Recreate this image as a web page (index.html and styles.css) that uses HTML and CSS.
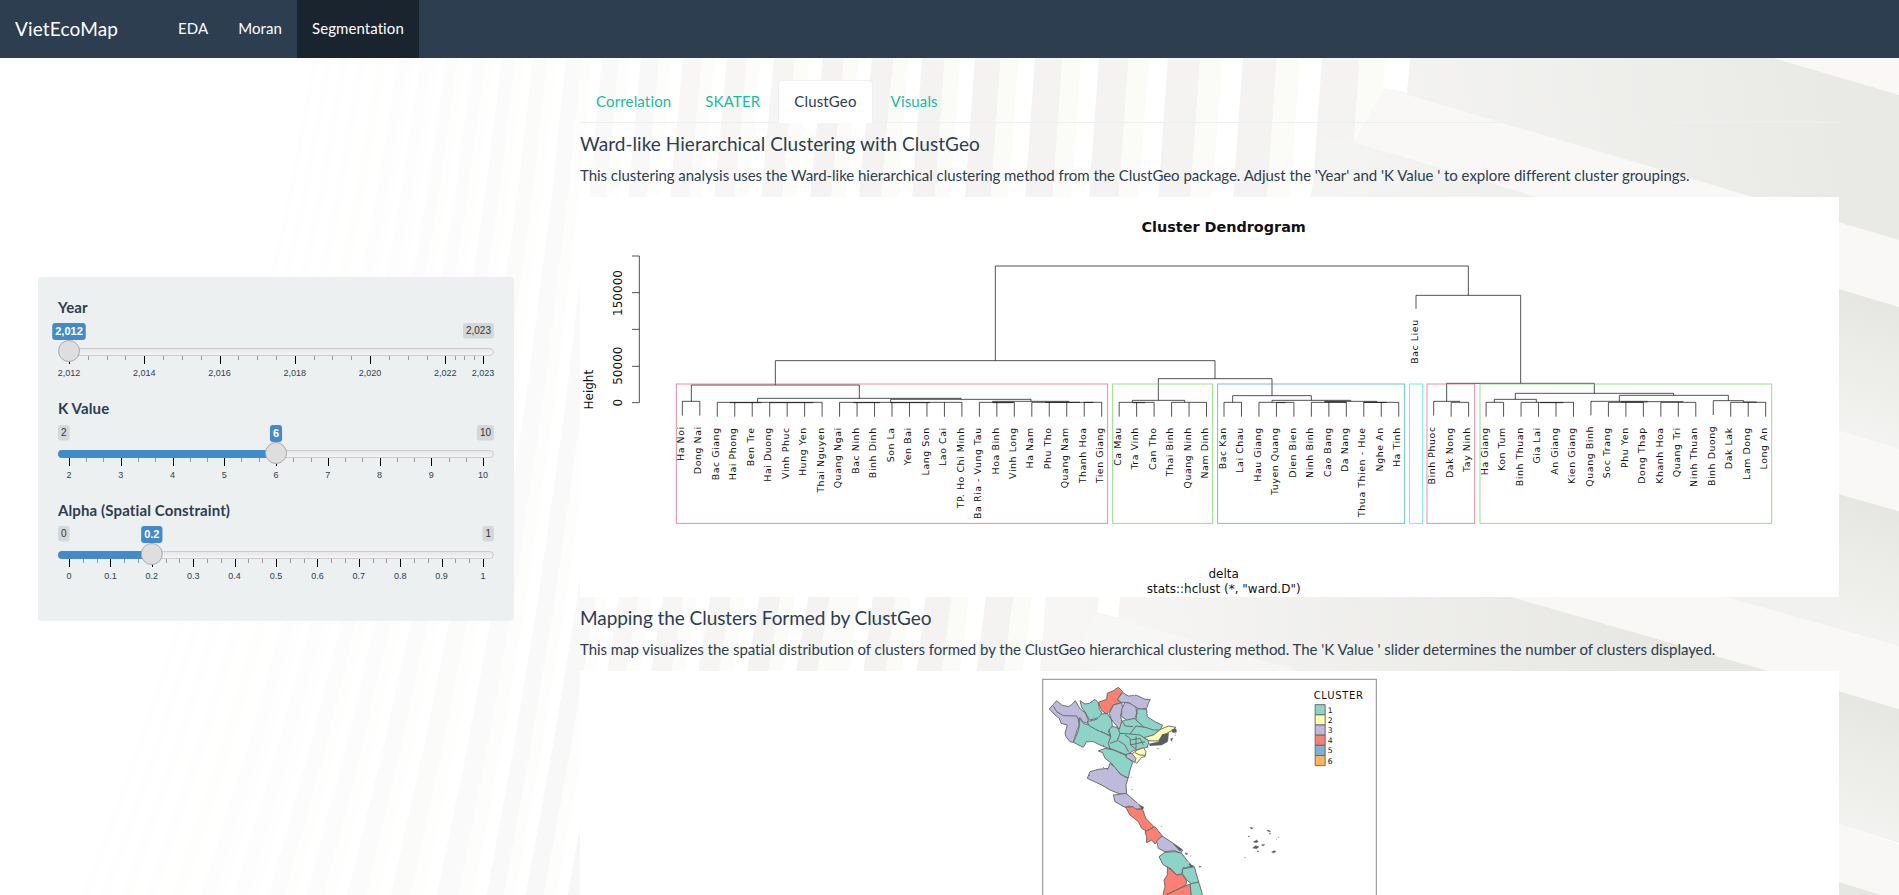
FILE: index.html
```html
<!DOCTYPE html>
<html lang="en">
<head>
<meta charset="utf-8">
<title>VietEcoMap</title>
<link rel="stylesheet" href="styles.css">
</head>
<body>
<svg class="backdrop" viewBox="0 0 1899 895" aria-hidden="true">
  <defs>
    <linearGradient id="slab" gradientUnits="userSpaceOnUse" x1="0" y1="0" x2="-38" y2="130">
      <stop offset="0" stop-color="#e6e6e2"/><stop offset="1" stop-color="#f3f3f1"/>
    </linearGradient>
    <linearGradient id="top" gradientUnits="userSpaceOnUse" x1="1340" y1="140" x2="1830" y2="60">
      <stop offset="0" stop-color="#f5f4f3"/><stop offset="1" stop-color="#e9eae6"/>
    </linearGradient>
    <linearGradient id="low" gradientUnits="userSpaceOnUse" x1="1080" y1="660" x2="1690" y2="620">
      <stop offset="0" stop-color="#f7f6f5"/><stop offset="1" stop-color="#e6e6e2"/>
    </linearGradient>
    <linearGradient id="mid" gradientUnits="userSpaceOnUse" x1="1340" y1="150" x2="1520" y2="190">
      <stop offset="0" stop-color="#f4f4f2"/><stop offset="1" stop-color="#efefec"/>
    </linearGradient>
  </defs>
  <g id="stripes"></g>
  <path fill="url(#top)" d="M1410 58H1774L1899 94V242L1384 88L1407 93Z"/>
  <path fill="#f9f8f7" d="M1384 88L1899 240V307L1354 142Z"/>
  <path fill="#f9f8f7" d="M1774 58H1899V95Z"/>
  <path fill="url(#mid)" d="M1354 142L1540 198H1310L1322 142Z"/>
  <path fill="url(#low)" d="M1046 597H1512L1770 671H1040Z"/>
  <path fill="#fffffe" d="M1099 597H1120L1118 618L1097 612Z"/>
  <path fill="#f9f8f7" opacity=".6" d="M1097 613L1300 671H1110L1073 660Z"/>
  <path fill="#f9f8f7" d="M1512 597H1725L1899 646V709Z"/>
  <path fill="#f1f1ef" d="M1725 597H1899V646Z"/>
  <g fill="url(#slab)">
    <path transform="translate(1839 289)" d="M0 0L60 18V160L0 142Z"/>
    <path transform="translate(1839 494)" d="M0 0L60 17V154L0 136Z"/>
    <path transform="translate(1839 691)" d="M0 0L60 18V152L0 133Z"/>
    <path transform="translate(1839 882)" d="M0 0L60 18V30H0Z"/>
  </g>
  <g fill="#f9f8f7">
    <path d="M1839 431L1899 449V511L1839 494Z"/>
    <path d="M1839 629L1899 646V709L1839 691Z"/>
    <path d="M1839 824L1899 844V900L1839 882Z"/>
  </g>
</svg>

<nav class="navbar">
  <a class="brand">VietEcoMap</a>
  <a class="nav-link">EDA</a>
  <a class="nav-link">Moran</a>
  <a class="nav-link active">Segmentation</a>
</nav>

<div class="page">
  <form class="well">
    <div class="field"><label>Year</label><div class="slider" data-min="2012" data-max="2023" data-value="2012" data-step="2" data-minor="4" data-group="1"></div></div>
    <div class="field"><label>K Value</label><div class="slider" data-min="2" data-max="10" data-value="6" data-step="1" data-minor="3"></div></div>
    <div class="field"><label>Alpha (Spatial Constraint)</label><div class="slider" data-min="0" data-max="1" data-value="0.2" data-step="0.1" data-minor="3"></div></div>
  </form>

  <main class="main">
    <div class="tabs">
      <a class="tab">Correlation</a>
      <a class="tab">SKATER</a>
      <a class="tab active">ClustGeo</a>
      <a class="tab">Visuals</a>
    </div>
    <h4 class="first">Ward-like Hierarchical Clustering with ClustGeo</h4>
    <p>This clustering analysis uses the Ward-like hierarchical clustering method from the ClustGeo package. Adjust the 'Year' and 'K Value ' to explore different cluster groupings.</p>
    <svg class="plot" viewBox="0 0 3777 1200">
      <rect width="3777" height="1200" fill="#fff"/>
      <text class="plot-title" x="1931" y="106">Cluster Dendrogram</text>
      <g class="tree">
        <path d="M156 177H178V617H156M156 287H178M156 397H178M156 508H178"/>
        <path d="M1246 491V207H2665V295M586 564V491H1905V545M334 613V564H838V604M533 616V604H1143V607M932 616V607H1353V613M1238 616V613H1468"/>
        <path d="M1735 610V545H2076V596M1657 616V610H1814V616M1958 616V596H2194V610M2076 616V610H2312V613H2390V616M2233 613H2312M2233 615H2300"/>
        <path d="M2508 335V295H2822V559M2600 613V559H3043V589M2561 613H2640M2806 607V589H3281V595M2743 616V607H2869V616M3118 613V595H3445V611M3033 613H3203V614H3310M3123 615H3203M3400 611H3491V615H3530"/>
        <path d="M450 617H545M570 617H700M820 617H900M932 617H1050M1238 617H1300M1395 616H1500M1512 616H1540M1657 617H1695M2090 617H2116M2350 616H2420M2880 617H2950"/>
        <path id="leaves"/>
      </g>
      <g class="clusters">
        <rect class="c2" x="289" y="561" width="1294" height="418"/>
        <rect class="c3" x="1598" y="561" width="300" height="418"/>
        <rect class="c4" x="1913" y="561" width="561" height="418"/>
        <rect class="c5" x="2489" y="561" width="39" height="418"/>
        <rect class="c2" x="2541" y="561" width="143" height="418"/>
        <rect class="c3" x="2700" y="561" width="875" height="418"/>
      </g>
      <g class="axis-text">
        <text transform="translate(126 617) rotate(-90)">0</text>
        <text transform="translate(126 506) rotate(-90)">50000</text>
        <text transform="translate(126 288) rotate(-90)">150000</text>
        <text transform="translate(39 578) rotate(-90)">Height</text>
        <text x="1931" y="1144">delta</text>
        <text x="1931" y="1187">stats::hclust (*, "ward.D")</text>
      </g>
      <g id="leaf-names" class="leaf-names"></g>
    </svg>
    <h4 class="second">Mapping the Clusters Formed by ClustGeo</h4>
    <p class="tight">This map visualizes the spatial distribution of clusters formed by the ClustGeo hierarchical clustering method. The 'K Value ' slider determines the number of clusters displayed.</p>
    <svg class="plot" viewBox="0 0 3777 1200">
      <defs>
        <filter id="coast" x="-5%" y="-5%" width="110%" height="110%">
          <feTurbulence type="fractalNoise" baseFrequency="0.2" numOctaves="2" seed="4"/>
          <feDisplacementMap in="SourceGraphic" scale="5" xChannelSelector="R" yChannelSelector="G"/>
        </filter>
      </defs>
      <rect width="3777" height="1200" fill="#fff"/>
      <g transform="translate(1350 -3)">
        <rect class="frame" x="38" y="28" width="1001" height="1140"/>
        <g class="map" filter="url(#coast)">
          <path class="k1" d="M235 168L262 172L280 152L310 143L322 150L345 172L370 172L392 180L370 195L345 205L357 212L352 232L325 238L310 242L290 255L265 245L240 235L232 220L242 200Z"/>
          <path class="k3" d="M58 117L80 92L95 105L115 110L125 104L136 92L146 110L152 118L165 128L175 150L172 160L158 155L150 142L145 150L148 165L142 178L135 200L130 217L120 215L108 200L105 190L112 165L93 160L88 145L75 135Z"/>
          <path class="line" d="M70 108L80 125L100 137L140 138L146 150"/>
          <path class="k1" d="M150 92L165 102L178 100L195 88L205 98L208 118L216 130L208 142L190 148L178 150L168 130L155 112Z"/>
          <path class="k1" d="M172 155L200 148L215 132L232 130L245 150L247 168L235 182L240 197L225 190L205 182L180 175Z"/>
          <path class="k4" d="M205 97L230 88L232 70L250 62L265 52L278 65L268 78L262 90L275 98L250 105L240 122L230 132L215 122Z"/>
          <path class="k3" d="M278 68L295 78L320 76L345 88L361 88L355 100L350 115L330 118L310 108L295 98L275 98L262 88Z"/>
          <path class="k3" d="M250 105L275 98L278 115L272 135L275 155L268 178L258 165L245 150L238 130Z"/>
          <path class="k3" d="M285 97L300 100L318 112L320 130L315 145L290 150L275 140L275 118Z"/>
          <path class="k1" d="M322 116L350 118L352 140L375 155L398 166L390 180L370 180L340 170L318 150L320 130Z"/>
          <path class="k1" d="M148 145L160 160L175 165L200 180L225 190L242 200L235 220L240 237L210 225L190 215L170 215L160 232L130 217L142 190L148 170Z"/>
          <path class="line" d="M262 172L270 190L262 212L240 220M270 190L300 192L330 195L345 205M300 192L318 168L345 172M265 212L285 225L295 245M285 195L300 205L302 225L318 238M302 210L330 205L340 225M318 200L318 236M275 150L285 168L310 170M300 225L345 215"/>
          <path class="k1" d="M205 243L225 235L250 240L285 255L308 277L300 300L295 324L275 315L255 295L245 280L225 265L218 248Z"/>
          <path class="k2" d="M392 178L415 168L438 172L425 182L410 190L395 200L385 213L357 212L342 203L370 195Z"/>
          <path class="isle" d="M397 193L416 190L413 215L395 225L360 227L358 221L385 216ZM424 180L438 176L440 186L428 188M422 206L428 204L425 214Z"/>
          <path class="k2" d="M322 240L340 233L348 245L345 260L335 262L320 280L308 268L305 252Z"/><path class="line" d="M315 248L330 255L346 256"/>
          <path class="k3" d="M290 252L305 250L318 266L314 277L288 262Z"/>
          <path class="k3" d="M240 280L255 292L270 312L294 325L288 345L290 372L270 372L240 360L215 345L172 325L180 305L205 298L235 295Z"/>
          <path class="k3" d="M250 375L288 370L300 380L325 402L340 415L315 418L300 408L285 412L255 395Z"/>
          <path class="k4" d="M287 412L310 410L318 418L338 418L347 445L372 470L350 484L335 475L325 455L300 435Z"/>
          <path class="k4" d="M345 485L375 470L396 497L388 510L375 522L365 510L350 518L350 500Z"/>
          <path class="k3" d="M380 513L396 498L430 520L458 540L452 551L435 542L405 545L385 535Z"/>
          <path class="k1" d="M387 560L405 547L435 545L455 550L470 570L486 588L460 595L455 612L440 615L425 598L400 585Z"/>
          <path class="k1" d="M457 597L493 590L500 615L506 636L485 642L470 630L458 612Z"/>
          <path class="k4" d="M412 590L440 615L455 612L470 632L468 645L415 672L395 690L405 650L402 630L412 615Z"/>
          <path class="k1" d="M480 642L506 636L515 665L522 700H485Z"/>
          <path class="k4" d="M415 672L450 655L480 642L486 700H390Z"/>
          <path class="isle" d="M430 522L455 538L450 544ZM476 582L492 588L484 592ZM328 406L342 412L336 417ZM466 548L474 551L468 554ZM508 588L514 590L508 592Z"/>
        </g>
        <path class="isle" d="M660 472L670 474L664 477ZM710 480L720 482L721 486L714 484ZM718 490L722 491L719 493ZM655 498L659 499L656 501ZM670 516L680 510L685 515L678 518ZM694 525L704 523L700 528ZM668 534L676 527L687 530L680 536ZM681 543L686 543L684 546ZM725 546L732 542L738 544L731 549Z"/>
        <path class="line faint" d="M743 502L748 502M380 235L388 237M643 562H648M417 268H422M301 322H305M303 359H308M392 469H397M433 197L438 195M480 558H484M738 508H741"/>
        <text class="legend-title" x="851" y="87" textLength="148">CLUSTER</text>
        <g class="legend">
          <rect class="k1" x="855.5" y="104" width="30" height="30.5"/><rect class="k2" x="855.5" y="134.5" width="30" height="30.5"/><rect class="k3" x="855.5" y="165" width="30" height="30.5"/><rect class="k4" x="855.5" y="195.500" width="30" height="30.5"/><rect class="k5" x="855.5" y="226" width="30" height="30.5"/><rect class="k6" x="855.5" y="256.500" width="30" height="30.5"/>
          <text x="893" y="129">1</text><text x="893" y="159">2</text><text x="893" y="189">3</text><text x="893" y="220">4</text><text x="893" y="250">5</text><text x="893" y="282">6</text>
        </g>
      </g>
    </svg>
  </main>
</div>
<script src="app.js"></script>
</body>
</html>
```

FILE: styles.css
```css
* { box-sizing: border-box; }
body {
  margin: 0;
  height: 895px;
  overflow: hidden;
  background: #fff;
  color: #2c3e50;
  font: 15px/1.42857 Lato, sans-serif;
  font-variant-ligatures: none;
}
.backdrop { position: absolute; inset: 0; width: 1899px; height: 895px; z-index: -1; }

.navbar { display: flex; align-items: stretch; height: 58px; background: #2c3e50; color: #fff; line-height: 21px; }
.brand { width: 163px; padding: 18px 15px; font-size: 19px; letter-spacing: .15px; }
.nav-link { padding: 18px 15px; letter-spacing: .08px; }
.nav-link.active { background: #1a242f; }

.page { display: grid; grid-template-columns: 476px 1259px; column-gap: 66px; height: 837px; padding-left: 38px; align-items: start; overflow: hidden; }

.well { margin: 219px 0 0; height: 344px; padding: 20px; background: #ecf0f1; border-radius: 4px; }
.field { height: 101.43px; }
.field label { display: block; margin-bottom: 5px; font-weight: 700; line-height: 21.43px; letter-spacing: .12px; }
.slider svg { display: block; width: 436px; height: 60px; overflow: visible; font-family: "Liberation Sans", Arial, sans-serif; }
.slider text { text-anchor: middle; fill: #2c3e50; }
.slider .rail { fill: url(#rail); stroke: #ccc; }
.slider .bar { fill: #428bca; }
.slider .knob { fill: #dedede; stroke: #ababab; }
.slider .cap { fill: #d4d8d9; }
.slider .cap-text { font-size: 10px; fill: #333; }
.slider .tip { fill: #428bca; }
.slider .tip-text { font-size: 11px; font-weight: 700; fill: #fff; }
.slider .grid-text { font-size: 9px; }
.slider .major { fill: #000; }
.slider .minor { fill: #999; }

.main { height: 837px; padding-top: 22px; overflow: hidden; }
.tabs { display: flex; height: 43px; border-bottom: 1px solid #ecf0f1; }
.tab { height: 43px; margin-right: 2px; padding: 10px 15px; border: 1px solid transparent; border-radius: 4px 4px 0 0; color: #18bc9c; letter-spacing: .15px; }
.tab.active { background: #fff; border-color: #ecf0f1 #ecf0f1 #fff; color: #2c3e50; }
h4 { margin: 10.500px 0; font-size: 19px; font-weight: 400; line-height: 21px; }
h4.first { margin: 9.500px 0 11.500px; letter-spacing: .05px; }
h4.second { letter-spacing: -.06px; }
p { margin: 0 0 10.500px; line-height: 21px; white-space: nowrap; letter-spacing: -.035px; }
p.tight { margin-bottom: 11.500px; letter-spacing: -.04px; }
.plot { display: block; width: 1259px; height: 400px; }

.plot text { font-family: "DejaVu Sans", sans-serif; fill: #111; letter-spacing: 0; }
.plot .plot-title { font-size: 43.2px; font-weight: 700; text-anchor: middle; }
.tree path { fill: none; stroke: #000; stroke-width: 2.4; stroke-opacity: .85; }
.axis-text text { font-size: 36px; text-anchor: middle; }
.plot .leaf-names text { font-size: 28.200px; letter-spacing: 1.7px; text-anchor: end; }
.clusters rect { fill: none; stroke-width: 2.6; stroke-opacity: .75; }
.c2 { stroke: #df536b; }
.c3 { stroke: #61d04f; }
.c4 { stroke: #2297e6; }
.c5 { stroke: #28e2e5; }

.frame { fill: none; stroke: #999; stroke-width: 3.500; }
.map path, .legend rect { stroke: #666; stroke-width: 2.800; stroke-linejoin: round; }
.line { fill: none; }
.plot .faint { stroke: #888; stroke-width: 2; }
.plot .isle { fill: #5c5c5c; stroke: #5c5c5c; stroke-width: 1.200; }
.k1 { fill: #8dd3c7; }
.k2 { fill: #ffffb3; }
.k3 { fill: #bebada; }
.k4 { fill: #fb8072; }
.k5 { fill: #80b1d3; }
.k6 { fill: #fdb462; }
.legend-title { font-size: 30px; }
.legend text { font-size: 23px; }
```

FILE: app.js
```javascript
const r = Math.round;

/* Range sliders: rail, filled bar, knob, end captions and tick grid. */
const W = 436, PAD = 11, SPAN = W - 2 * PAD;
document.querySelectorAll('.slider').forEach((el, index) => {
  const d = el.dataset;
  const min = +d.min, max = +d.max, value = +d.value, step = +d.step, minor = +d.minor;
  const fmt = v => { const n = +v.toFixed(1); return d.group ? n.toLocaleString('en-US') : String(n); };
  const pos = v => PAD + (v - min) / (max - min) * SPAN;
  const wide = (s, size) => [...s].reduce((w, c) => w + (c === ',' || c === '.' ? .278 : .556), 0) * size;
  const stops = [];
  for (let v = min; v < max - 1e-6; v += step) stops.push(v);
  stops.push(max);
  let out = '<defs><linearGradient id="rail" x2="0" y2="1"><stop stop-color="#e6e6e6"/><stop offset="1" stop-color="#f5f5f5"/></linearGradient></defs>';
  out += '<rect class="rail" x=".5" y="25.500" width="435" height="7" rx="4"/>';
  if (value > min) out += `<path class="bar" d="M${pos(value)} 25H4a4 4 0 0 0 0 8H${pos(value)}Z"/>`;
  stops.forEach((v, i) => {
    out += `<rect class="major" x="${r(pos(v))}" y="33" width="1" height="8"/>`;
    out += `<text class="grid-text" x="${pos(v)}" y="53">${fmt(v)}</text>`;
    if (i < stops.length - 1)
      for (let k = 1; k < minor; k++)
        out += `<rect class="minor" x="${r(pos(v + (stops[i + 1] - v) * k / minor))}" y="33" width="1" height="4"/>`;
  });
  const caption = (s, right) => {
    const w = wide(s, 10) + 6, x = right ? W - w : 0;
    return `<rect class="cap" x="${x}" y="0" width="${w}" height="15.500" rx="3"/><text class="cap-text" x="${x + w / 2}" y="11.300">${s}</text>`;
  };
  if (value > min) out += caption(fmt(min), false);
  out += caption(fmt(max), true);
  const tw = wide(fmt(value), 11) + 6, c = pos(value);
  out += `<rect class="tip" x="${c - tw / 2}" y="0" width="${tw}" height="17" rx="3"/><text class="tip-text" x="${c}" y="12">${fmt(value)}</text>`;
  out += `<circle class="knob" cx="${c}" cy="28" r="10.500"/>`;
  el.innerHTML = `<svg viewBox="0 0 436 60">${out}</svg>`;
});

/* Dendrogram leaves; each entry is [names joined by the same bracket]. */
const brackets = [
  'Ha Noi|Dong Nai', 'Bac Giang|Hai Phong|Ben Tre|Hai Duong|Vinh Phuc|Hung Yen|Thai Nguyen',
  'Quang Ngai|Bac Ninh|Binh Dinh|Son La|Yen Bai|Lang Son|Lao Cai|TP. Ho Chi Minh',
  'Ba Ria - Vung Tau|Hoa Binh|Vinh Long', 'Ha Nam|Phu Tho|Quang Nam|Thanh Hoa|Tien Giang',
  'Ca Mau|Tra Vinh|Can Tho', 'Thai Binh|Quang Ninh|Nam Dinh', 'Bac Kan|Lai Chau',
  'Hau Giang|Tuyen Quang|Dien Bien', 'Ninh Binh|Cao Bang|Da Nang', 'Thua Thien - Hue|Nghe An|Ha Tinh',
  'Bac Lieu', 'Binh Phuoc', 'Dak Nong|Tay Ninh', 'Ha Giang|Kon Tum', 'Binh Thuan|Gia Lai|An Giang|Kien Giang',
  'Quang Binh', 'Soc Trang|Phu Yen|Dong Thap', 'Khanh Hoa|Quang Tri|Ninh Thuan', 'Binh Duong', 'Dak Lak|Lam Dong|Long An'
];
const raised = { 'Ha Noi': 613, 'Dong Nai': 613, 'Bac Lieu': 292, 'Binh Phuoc': 613, 'Quang Binh': 612, 'Binh Duong': 611 };
let i = 0, path = '', names = '';
brackets.forEach(b => {
  const list = b.split('|');
  const start = i;
  list.forEach(n => {
    const x = 307 + 52.42 * i, y = raised[n] || 616;
    if (n !== 'Bac Lieu') path += `M${x} ${y}V${y + 43}`;
    names += `<text transform="translate(${x + 5} ${y + 75}) rotate(-90)">${n}</text>`;
    i++;
  });
  if (list.length > 1) path += `M${307 + 52.42 * start} ${raised[list[0]] || 616}H${307 + 52.42 * (i - 1)}`;
});
document.getElementById('leaves').setAttribute('d', path);
document.getElementById('leaf-names').innerHTML = names;

/* Backdrop louvres: a shaded face, a lit face and a white gap, curving to the left. */
const edges = [313, 326, 341, 358, 377, 398, 421, 446, 473, 502, 533, 566, 602, 641, 683, 727, 774, 823, 872, 922, 975, 1035, 1099, 1168, 1243, 1322, 1410];
const shift = (x, y) => {
  const t = y - 58, lean = x > 900 ? .85 : x > 600 ? 1.1 : 1.1 + (600 - x) / 260;
  return x - lean * (.075 * t + .00006 * t * t);
};
const band = (a, b, fill, opacity) => {
  const ys = [58, 200, 400, 600, 750, 895];
  const left = ys.map(y => `${shift(a, y).toFixed(1)} ${y}`);
  const right = ys.slice().reverse().map(y => `${shift(b, y).toFixed(1)} ${y}`);
  return `<path d="M${left.concat(right).join('L')}Z" fill="${fill}" opacity="${opacity}"/>`;
};
let louvres = '';
for (let k = 0; k < edges.length - 1; k++) {
  const a = edges[k], w = edges[k + 1] - a;
  const o = Math.max(.08, Math.pow(Math.min(1, (a - 230) / 600), 1.5));
  louvres += band(a, a + w * .43, '#f4f3f2', o.toFixed(2));
  louvres += band(a + w * .43, a + w * .72, '#fbfbf8', o.toFixed(2));
}
document.getElementById('stripes').innerHTML = louvres;
```
